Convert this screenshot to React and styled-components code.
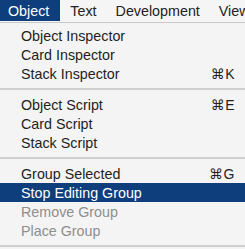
import React from 'react';
import styled, { createGlobalStyle } from 'styled-components';

const GlobalStyle = createGlobalStyle`
  html, body {
    margin: 0;
    padding: 0;
    background: #f4f4f4;
    overflow: hidden;
  }
  body {
    font-family: "Liberation Sans", Arial, "DejaVu Sans", sans-serif;
    -webkit-font-smoothing: antialiased;
  }
`;

const menus = ['Object', 'Text', 'Development', 'View'];

const items = [
  { label: 'Object Inspector' },
  { label: 'Card Inspector' },
  { label: 'Stack Inspector', key: 'K' },
  { sep: true },
  { label: 'Object Script', key: 'E' },
  { label: 'Card Script' },
  { label: 'Stack Script' },
  { sep: true },
  { label: 'Group Selected', key: 'G' },
  { label: 'Stop Editing Group', active: true },
  { label: 'Remove Group', disabled: true },
  { label: 'Place Group', disabled: true },
  { sep: true },
];

const App = () => {
  return (
    <>
      <GlobalStyle />
      <Screen>
        <MenuBar>
          {menus.map((m, i) => (
            <MenuTitle key={m} open={i === 0}>{m}</MenuTitle>
          ))}
        </MenuBar>
        <Dropdown>
          {items.map((it, i) =>
            it.sep ? (
              <Separator key={i} />
            ) : (
              <Item key={i} active={it.active} disabled={it.disabled}>
                <span>{it.label}</span>
                {it.key && <Shortcut>⌘{it.key}</Shortcut>}
              </Item>
            )
          )}
        </Dropdown>
      </Screen>
    </>
  );
};

export default App;

const Screen = styled.div`
  width: 245px;
  height: 249px;
  overflow: hidden;
  background: #f4f4f4;
`;

const MenuBar = styled.div`
  display: flex;
  height: 22px;
  background: #f5f5f5;
  border-bottom: 1px solid #c9c9c9;
  white-space: nowrap;
`;

const MenuTitle = styled.div`
  display: flex;
  align-items: center;
  padding: ${props => (props.open ? '0 11px 0 8px' : '0 9px 0 10px')};
  font-size: 14.3px;
  color: ${props => (props.open ? '#ffffff' : '#222222')};
  background: ${props => (props.open ? '#0e3e7b' : 'transparent')};
  height: 21px;
`;

const Dropdown = styled.div`
  display: flex;
  flex-direction: column;
  padding-top: 3px;
  background: #f4f4f4;
`;

const Item = styled.div`
  display: flex;
  align-items: center;
  justify-content: space-between;
  height: 19px;
  padding: 0 10px 0 21px;
  font-size: 14.3px;
  color: ${props =>
    props.active ? '#ffffff' : props.disabled ? '#8e8e8e' : '#1e1e1e'};
  background: ${props => (props.active ? '#0e3e7b' : 'transparent')};
`;

const Shortcut = styled.span`
  font-size: 14px;
  letter-spacing: 0.5px;
`;

const Separator = styled.div`
  height: 12px;
  display: flex;
  align-items: center;

  &::after {
    content: '';
    flex: 1;
    height: 2px;
    background: #cfcfcf;
  }
`;
